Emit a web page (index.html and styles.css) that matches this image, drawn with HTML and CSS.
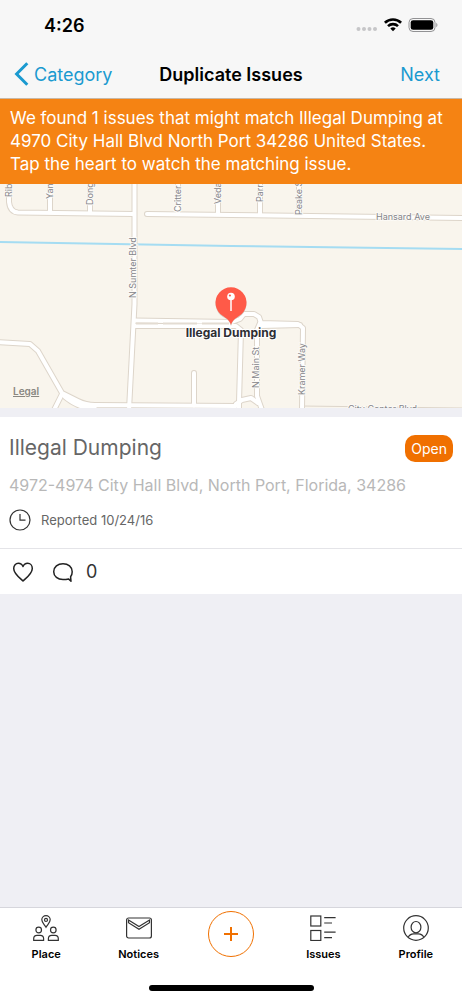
FILE: index.html
```
<!DOCTYPE html>
<html lang="en">
<head>
    <meta charset="UTF-8">
    <meta name="viewport" content="width=device-width, initial-scale=1">
    <title>Duplicate Issues</title>
    <link rel="stylesheet" href="styles.css">
</head>
<body>

    <!-- Header -->
    <header class="header">
        <div class="status-bar">
            <span class="time">4:26</span>
            <div class="status-icons">
                <svg class="signal" width="22" height="16" viewBox="0 0 22 16" fill="#c6c6c8">
                    <circle cx="2.5" cy="12" r="2"/><circle cx="8" cy="12" r="2"/><circle cx="13.5" cy="12" r="2"/><circle cx="19" cy="12" r="2"/>
                </svg>
                <svg width="20" height="16" viewBox="0 0 20 16" fill="none" stroke="#000" stroke-width="2.6">
                    <path d="M1.9 5.8a11.6 11.6 0 0 1 16.2 0"/>
                    <path d="M5 9.1a7.2 7.2 0 0 1 10 0"/>
                    <path d="M10 14.2 7.3 11.5a3.9 3.9 0 0 1 5.4 0z" fill="#000" stroke="none"/>
                </svg>
                <svg width="30" height="16" viewBox="0 0 30 16">
                    <rect x="1" y="1.5" width="26" height="13" rx="4" fill="none" stroke="#929294"/>
                    <rect x="2.7" y="3.2" width="22.6" height="9.6" rx="2.4"/>
                    <path d="M28.3 5.8c1.5.7 1.5 3.7 0 4.4z" fill="#929294"/>
                </svg>
            </div>
        </div>
        <nav class="nav-bar">
            <a href="#" class="nav-link back">
                <svg width="16" height="24" viewBox="0 0 16 24" fill="none" stroke="currentColor" stroke-width="3">
                    <path d="M13.3 1.2 2.6 12l10.7 10.8"/>
                </svg>
                Category
            </a>
            <h1>Duplicate Issues</h1>
            <a href="#" class="nav-link next">Next</a>
        </nav>
    </header>

    <main class="content">
        <p class="banner">We found 1 issues that might match Illegal Dumping at 4970 City Hall Blvd North Port 34286 United States. Tap the heart to watch the matching issue.</p>

        <!-- Map -->
        <svg class="map" viewBox="0 0 462 224">
            <defs>
                <g id="roads">
                    <path d="M9 -4V18Q10 28 18 28.500L134 30M50 -4V28M90 -4V29"/>
                    <path d="M147 30L231 31L462 34M178 -4V30M218 -4V30M260 -4V31M299 -4V31"/>
                    <path d="M134.500 -4V120L129 226"/>
                    <path d="M134 136.500L232 138L240 135L244 130H254L259 133L261 139L298 140L303 144L302 226"/>
                    <path d="M134 142H236L241 146L239 218V226M260 139L257 146V212L262 226M236 220L242 216L251 214L258 219"/>
                    <path d="M261 142L300 141"/>
                    <path d="M-4 158L30 160L38 167L62 209L78 217Q86 221 95 221L236 222M62 210L54 226M65 213Q78 224 95 225M194 189V222"/>
                </g>
            </defs>
            <rect class="land" width="462" height="224"/>
            <path class="water" d="M0 58L231 62L462 65"/>
            <path class="road-faint" d="M302 222L462 224"/>
            <use href="#roads" class="road-edge"/>
            <use href="#roads" class="road"/>
            <path class="median" d="M136 139.500H158M163 139.500H197M202 139.500H229"/>

            <g class="street">
                <text transform="translate(12 13) rotate(-90)">Rib</text>
                <text transform="translate(53 15) rotate(-90)">Yan</text>
                <text transform="translate(93 21) rotate(-90)">Dong</text>
                <text transform="translate(181 28) rotate(-90)">Critter</text>
                <text transform="translate(221 20) rotate(-90)">Veda</text>
                <text transform="translate(263 18) rotate(-90)">Parr</text>
                <text transform="translate(302 31) rotate(-90)">Peake S</text>
                <text transform="translate(136 114) rotate(-90)">N Sumter Blvd</text>
                <text transform="translate(259 204) rotate(-90)">N Main St</text>
                <text transform="translate(305 211) rotate(-90)">Kramer Way</text>
                <text x="376" y="36">Hansard Ave</text>
                <text x="348" y="228">City Center Blvd</text>
            </g>
            <a href="#"><text class="legal" x="13" y="211">Legal</text></a>

            <path class="pin-shadow" d="M231 142C229 136 227 135 223 133A15.500 15.500 0 1 1 239 133C235 135 233 136 231 142Z"/>
            <path class="pin" d="M231 141C229.500 136 227 135 223 132A15.500 15.500 0 1 1 239 132C235 135 232.500 136 231 141Z"/>
            <path class="pin-needle" d="M231 115V127"/>
            <circle cx="231" cy="112.500" r="3.800" fill="#fff"/>
            <circle cx="229.900" cy="111.500" r="1.100" fill="#ff5a48"/>
            <text class="place" x="231" y="153">Illegal Dumping</text>
        </svg>

        <!-- Matching issue -->
        <article class="issue">
            <div class="issue-body">
                <div class="issue-top">
                    <h2>Illegal Dumping</h2>
                    <span class="badge">Open</span>
                </div>
                <p class="address">4972-4974 City Hall Blvd, North Port, Florida, 34286</p>
                <p class="reported">
                    <svg width="22" height="22" viewBox="0 0 22 22" fill="none" stroke="#333" stroke-width="1.200">
                        <circle cx="11" cy="11" r="10"/><path d="M11 5V11.200H16.500"/>
                    </svg>
                    Reported 10/24/16
                </p>
            </div>
            <div class="issue-actions">
                <button type="button" aria-label="Watch issue">
                    <svg width="22" height="22" viewBox="0 0 22 22" fill="none" stroke="#222" stroke-width="1.500" stroke-linejoin="round">
                        <path d="M11 20C8.500 17.500 1.700 12.600 1.700 7.400C1.700 4.200 3.800 2.300 6.300 2.300C8.500 2.300 10.200 3.500 11 5.600C11.800 3.500 13.500 2.300 15.700 2.300C18.200 2.300 20.300 4.200 20.300 7.400C20.300 12.600 13.500 17.500 11 20Z"/>
                    </svg>
                </button>
                <button type="button" aria-label="Comments">
                    <svg width="22" height="22" viewBox="0 0 22 22" fill="none" stroke="#222" stroke-width="1.500" stroke-linejoin="round">
                        <path d="M16.500 17.900C14.900 18.300 13 18.500 11 18.500C5.800 18.500 1.700 15.400 1.700 10.700C1.700 5.900 5.800 2.700 11 2.700S20.200 5.900 20.200 10.700C20.200 12.900 19.600 14.500 18.600 15.700L19 20.200Z"/>
                    </svg>
                    <span>0</span>
                </button>
            </div>
        </article>
    </main>

    <!-- Tab bar -->
    <footer class="footer">
        <nav class="tab-bar">
            <a href="#" class="tab">
                <svg width="26" height="26" viewBox="0 0 26 26" fill="none" stroke="#333" stroke-width="1.200">
                    <path d="M13 12.300C11.500 9.500 8.800 7.500 8.800 4.800A4.200 4.200 0 0 1 17.200 4.800C17.200 7.500 14.500 9.500 13 12.300Z"/>
                    <circle cx="13" cy="4.900" r="1.500"/>
                    <circle cx="5.700" cy="15" r="2.800"/><circle cx="20.300" cy="15" r="2.800"/>
                    <path d="M.700 25.300V23.500Q.700 20.300 4 20.300H7.300Q10.600 20.300 10.600 23.500V25.300ZM15.400 25.300V23.500Q15.400 20.300 18.700 20.300H22Q25.300 20.300 25.300 23.500V25.300Z"/>
                </svg>
                Place
            </a>
            <a href="#" class="tab">
                <svg width="26" height="26" viewBox="0 0 26 26" fill="none" stroke="#333" stroke-width="1.200">
                    <rect x=".600" y="3" width="24.800" height="20" rx="2"/>
                    <path d="M2.500 5L13 11.600L23.500 5V7.700L13 14.300L2.500 7.700Z"/>
                </svg>
                Notices
            </a>
            <button type="button" class="add" aria-label="Add issue">
                <svg width="16" height="16" viewBox="0 0 16 16" fill="none" stroke="currentColor" stroke-width="2">
                    <path d="M8 1V15M1 8H15"/>
                </svg>
            </button>
            <a href="#" class="tab">
                <svg width="26" height="26" viewBox="0 0 26 26" fill="none" stroke="#333" stroke-width="1.200">
                    <rect x=".800" y="1" width="10" height="10"/><rect x=".800" y="15.500" width="10" height="10"/>
                    <path d="M14.200 2.600H25.600M14.200 8H22M14.200 17.200H25.600M14.200 22.600H22"/>
                </svg>
                Issues
            </a>
            <a href="#" class="tab">
                <svg width="26" height="26" viewBox="0 0 26 26" fill="none" stroke="#333" stroke-width="1.200">
                    <circle cx="13" cy="13" r="12.300"/>
                    <ellipse cx="13" cy="12.200" rx="4.900" ry="5.700"/>
                    <path d="M5.200 22.500C6.200 20 8.300 19 10.700 18.900H15.300C17.700 19 19.800 20 20.800 22.500"/>
                </svg>
                Profile
            </a>
        </nav>
        <div class="home-indicator"></div>
    </footer>

</body>
</html>
```
FILE: styles.css
```
/* General Styles */
* {
    box-sizing: border-box;
}

body {
    font-family: Inter, 'Liberation Sans', sans-serif;
    background-color: #efeff4;
    color: #000;
    margin: 0;
    min-height: 100vh;
    display: flex;
    flex-direction: column;
}

h1, h2, p {
    margin: 0;
}

a {
    color: inherit;
    text-decoration: none;
}

button {
    font-family: inherit;
    color: inherit;
    background: none;
    border: none;
    padding: 0;
    cursor: pointer;
}

svg {
    display: block;
    flex-shrink: 0;
}

/* Header */
.header {
    background-color: #f7f7f7;
    border-bottom: 1px solid #c8b8a6;
}

.status-bar {
    display: flex;
    justify-content: space-between;
    align-items: center;
    height: 50px;
    padding: 0 24px 0 44px;
}

.time {
    font-size: 18px;
    font-weight: 600;
}

.status-icons {
    display: flex;
    gap: 5px;
}

.nav-bar {
    display: grid;
    grid-template-columns: 1fr auto 1fr;
    align-items: center;
    height: 48px;
    padding: 0 14px;
}

.nav-bar h1 {
    font-size: 18px;
    font-weight: 600;
}

.nav-link {
    font-size: 18px;
    color: #1a9ad0;
}

.back {
    display: flex;
    align-items: center;
    gap: 4px;
}

.next {
    padding-right: 8px;
    text-align: right;
}

/* Banner */
.banner {
    padding: 8px 10px;
    background-color: #f58313;
    color: #fff;
    font-size: 17px;
    line-height: 23px;
}

/* Map */
.content {
    flex: 1;
}

.map {
    width: 100%;
    height: auto;
}

.land {
    fill: #f9f5ed;
}

.water {
    fill: none;
    stroke: #a5dcf2;
    stroke-width: 2;
}

.road-faint {
    stroke: #ddd5ca;
}

.road, .road-edge {
    fill: none;
    stroke-linecap: round;
    stroke-linejoin: round;
}

.road-edge {
    stroke: #ddd5ca;
    stroke-width: 6px;
}

.road {
    stroke: #fff;
    stroke-width: 4px;
}

.median {
    stroke: #e3dcd2;
    stroke-width: 2px;
}

.street {
    font-size: 9px;
    fill: #85858a;
    stroke: #fcfaf6;
    stroke-width: 2px;
    paint-order: stroke;
}

.legal {
    font-size: 10px;
    font-weight: 600;
    fill: #8a8781;
    text-decoration: underline;
}

.pin {
    fill: #ff5a48;
}

.pin-shadow {
    fill: #d5cdc4;
}

.pin-needle {
    stroke: #fff;
    stroke-width: 1.5px;
}

.place {
    font-size: 12px;
    font-weight: 700;
    text-anchor: middle;
    fill: #2e2e33;
    stroke: #fff;
    stroke-width: 2px;
    paint-order: stroke;
}

/* Issue */
.issue {
    margin-top: 9px;
    background-color: #fff;
}

.issue-body {
    padding: 16px 9px 17px;
}

.issue-top {
    display: flex;
    justify-content: space-between;
    align-items: center;
}

.issue h2 {
    font-size: 21px;
    font-weight: 400;
    line-height: 30px;
    color: #666;
}

.badge {
    padding: 0 6px;
    border-radius: 10px;
    background-color: #f07000;
    color: #fff;
    font-size: 14px;
    line-height: 27px;
}

.address {
    margin-top: 10px;
    font-size: 16px;
    line-height: 24px;
    color: #b8b8b8;
}

.reported {
    display: flex;
    align-items: center;
    gap: 10px;
    margin-top: 12px;
    font-size: 13px;
    line-height: 22px;
    color: #666;
}

.issue-actions {
    display: flex;
    gap: 18px;
    height: 46px;
    padding: 0 12px;
    border-top: 1px solid #e4e4e8;
}

.issue-actions button {
    display: flex;
    align-items: center;
    gap: 12px;
    font-size: 18px;
    color: #333;
}

/* Tab bar */
.footer {
    background-color: #fff;
    border-top: 1px solid #d6d6dc;
}

.tab-bar {
    display: grid;
    grid-template-columns: repeat(5, 1fr);
    justify-items: center;
    height: 77px;
    padding-top: 3px;
}

.tab {
    display: flex;
    flex-direction: column;
    align-items: center;
    gap: 5px;
    padding-top: 4px;
    font-size: 11px;
    font-weight: 600;
    line-height: 16px;
}

.add {
    display: flex;
    justify-content: center;
    align-items: center;
    width: 46px;
    height: 46px;
    border: 1px solid #f07000;
    border-radius: 50%;
    color: #f07000;
}

.home-indicator {
    width: 165px;
    height: 6px;
    margin: 0 auto 9px;
    border-radius: 3px;
    background-color: #000;
}
```
